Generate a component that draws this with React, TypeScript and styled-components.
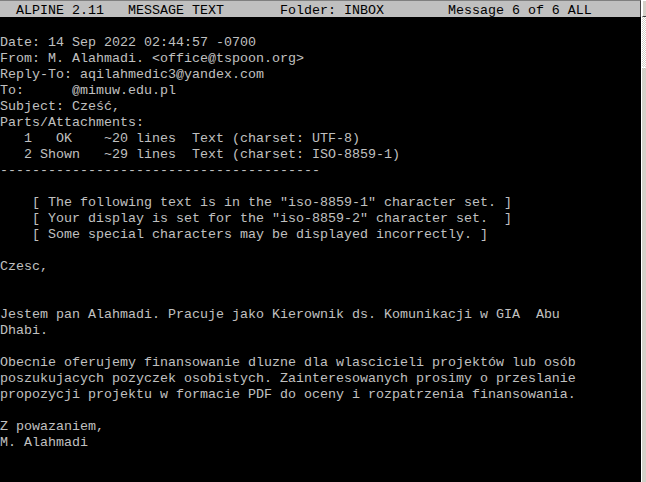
import React from "react";
import styled, { createGlobalStyle } from "styled-components";

const Global = createGlobalStyle`
  html, body { margin: 0; padding: 0; background: #000; }
  body { width: 646px; height: 482px; overflow: hidden; }
`;

const Window = styled.div`
  display: flex;
  width: 646px;
  height: 482px;
  overflow: hidden;
  background: #000;
`;

const Terminal = styled.div`
  flex: 0 0 641px;
  display: flex;
  flex-direction: column;
  background: #000;
  font-family: "Liberation Mono", "Courier New", monospace;
  font-size: 13.333px;
  line-height: 16px;
  color: #c0c0c0;
`;

const TitleBar = styled.div`
  height: 14px;
  padding-top: 2px;
  width: 640px;
  border-top: 1px solid #808080;
  border-right: 1px solid #404040;
  background: #c0c0c0;
  color: #000;
  white-space: pre;
`;

const Body = styled.div`
  display: flex;
  flex-direction: column;
  padding-top: 2px;
`;

const Line = styled.div`
  height: 16px;
  white-space: pre;
`;

const Scrollbar = styled.div`
  flex: 0 0 16px;
  display: flex;
  flex-direction: column;
  border-left: 1px solid #ffffff;
`;

const ArrowButton = styled.div`
  height: 15px;
  background: #d4d0c8;
  border-top: 1px solid #ffffff;
  border-left: 1px solid #ffffff;
  border-bottom: 1px solid #404040;
  border-right: 1px solid #404040;
`;

const Track = styled.div<{ $h: number }>`
  height: ${(p) => p.$h}px;
  background-color: #d4d0c8;
  background-image: conic-gradient(#ffffff 25%, #d4d0c8 0 50%, #ffffff 0 75%, #d4d0c8 0);
  background-size: 2px 2px;
`;

const Thumb = styled.div`
  flex: 1;
  background: #d4d0c8;
  border-top: 1px solid #ffffff;
`;

const title = "  ALPINE 2.11   MESSAGE TEXT       Folder: INBOX        Message 6 of 6 ALL";

const lines: string[] = [
  "",
  "Date: 14 Sep 2022 02:44:57 -0700",
  "From: M. Alahmadi. <office@tspoon.org>",
  "Reply-To: aqilahmedic3@yandex.com",
  "To:      @mimuw.edu.pl",
  "Subject: Cześć,",
  "Parts/Attachments:",
  "   1   OK    ~20 lines  Text (charset: UTF-8)",
  "   2 Shown   ~29 lines  Text (charset: ISO-8859-1)",
  "----------------------------------------",
  "",
  '    [ The following text is in the "iso-8859-1" character set. ]',
  '    [ Your display is set for the "iso-8859-2" character set.  ]',
  "    [ Some special characters may be displayed incorrectly. ]",
  "",
  "Czesc,",
  "",
  "",
  "Jestem pan Alahmadi. Pracuje jako Kierownik ds. Komunikacji w GIA  Abu",
  "Dhabi.",
  "",
  "Obecnie oferujemy finansowanie dluzne dla wlascicieli projektów lub osób",
  "poszukujacych pozyczek osobistych. Zainteresowanych prosimy o przeslanie",
  "propozycji projektu w formacie PDF do oceny i rozpatrzenia finansowania.",
  "",
  "Z powazaniem,",
  "M. Alahmadi",
];

export default function App() {
  return (
    <>
      <Global />
      <Window>
        <Terminal>
          <TitleBar>{title}</TitleBar>
          <Body>
            {lines.map((l, i) => (
              <Line key={i}>{l}</Line>
            ))}
          </Body>
        </Terminal>
        <Scrollbar>
          <ArrowButton />
          <Track $h={50} />
          <Thumb />
        </Scrollbar>
      </Window>
    </>
  );
}
